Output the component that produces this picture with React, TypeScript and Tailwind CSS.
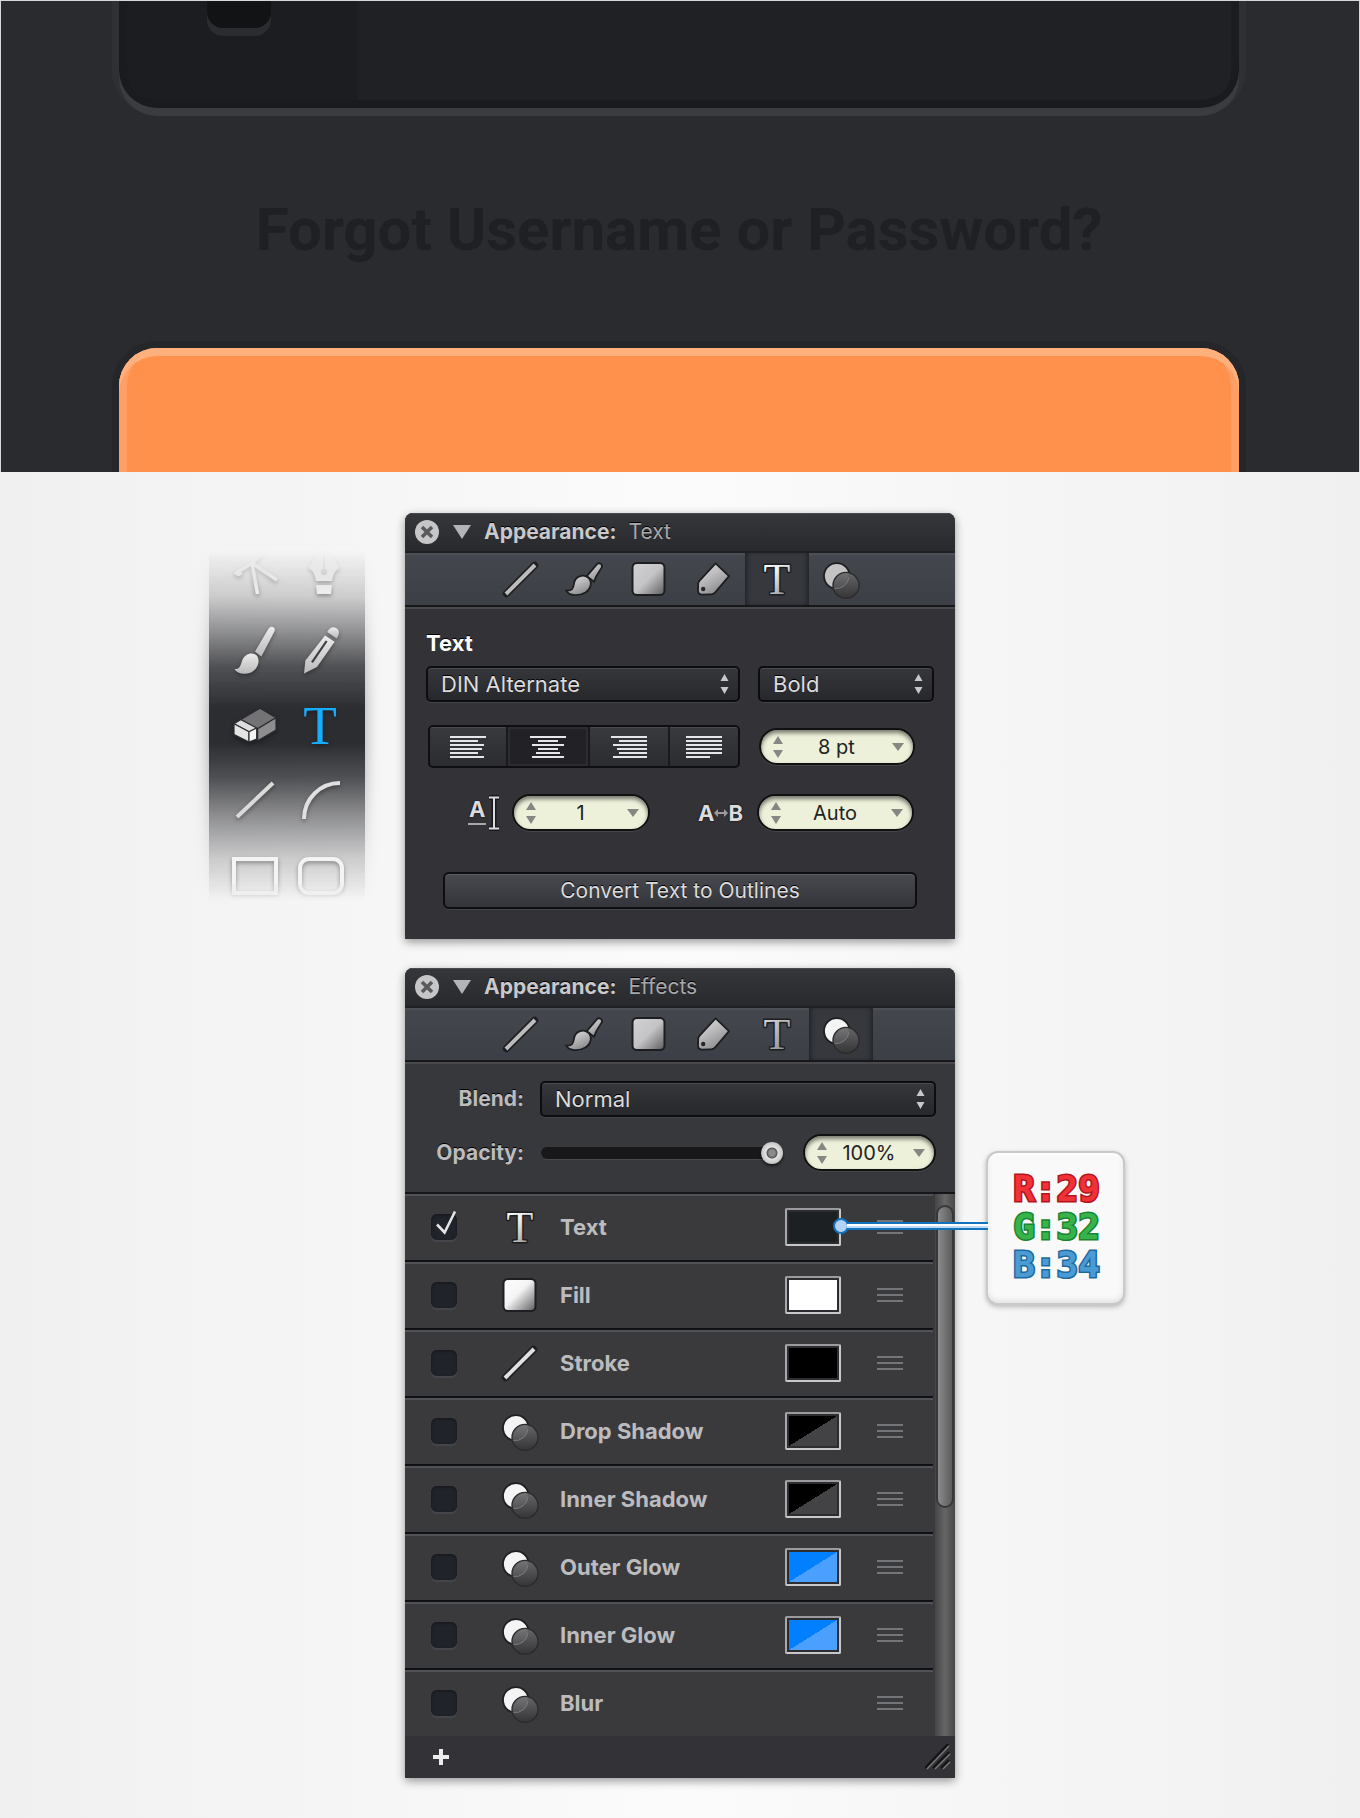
import { useState, type ReactNode } from "react";

const selectBox =
  "h-9 w-full appearance-none rounded-[5px] border-2 border-[#0d0d10] bg-linear-to-b from-[#36373b] to-[#27282c] pl-[13px] pr-8 text-[22px] leading-7 text-[#dcdcde] outline-none shadow-[inset_0_1px_0_#4b4c50,0_1px_0_#434347] [text-shadow:0_-1px_0_#000]";

/* Gradients shared by every icon on the page */
function Gradients() {
  return (
    <svg width="0" height="0" className="absolute" aria-hidden="true">
      <defs>
        <linearGradient id="silver" x1="0" y1="0" x2="0.6" y2="1">
          <stop offset="0" stopColor="#dededf" />
          <stop offset="0.45" stopColor="#bfbfc1" />
          <stop offset="1" stopColor="#8a8a8c" />
        </linearGradient>
        <linearGradient id="bright" x1="0" y1="0" x2="0.6" y2="1">
          <stop offset="0" stopColor="#ffffff" />
          <stop offset="0.45" stopColor="#f0f0f0" />
          <stop offset="1" stopColor="#8c8c8c" />
        </linearGradient>
        <linearGradient id="squareSilver" x1="0" y1="0" x2="1" y2="1">
          <stop offset="0" stopColor="#d2d2d4" />
          <stop offset="0.5" stopColor="#c4c4c6" />
          <stop offset="1" stopColor="#5c5c5e" />
        </linearGradient>
        <linearGradient id="squareBright" x1="0" y1="0" x2="1" y2="1">
          <stop offset="0" stopColor="#ffffff" />
          <stop offset="0.45" stopColor="#f4f4f4" />
          <stop offset="1" stopColor="#5a5a5a" />
        </linearGradient>
        <linearGradient id="lens" x1="0" y1="0" x2="0" y2="1">
          <stop offset="0" stopColor="#6a6a6c" stopOpacity="0.92" />
          <stop offset="1" stopColor="#343436" stopOpacity="0.95" />
        </linearGradient>
        <linearGradient id="tool" x1="0" y1="0" x2="0" y2="1">
          <stop offset="0" stopColor="#ececec" />
          <stop offset="1" stopColor="#b9b9ba" />
        </linearGradient>
      </defs>
    </svg>
  );
}

type IconName = "line" | "brush" | "square" | "tag" | "type" | "effects";

function Icon({ name, bright = false }: { name: IconName; bright?: boolean }) {
  const fill = bright ? "url(#bright)" : "url(#silver)";
  const edge = "#1d1e21";
  return (
    <svg viewBox="0 0 40 40" className="size-10 shrink-0 overflow-visible" aria-hidden="true">
      {name === "line" && (
        <>
          <path d="M5.5 34.5 33.5 6.5" stroke={edge} strokeWidth="7.4" strokeLinecap="round" />
          <path d="M5 35 34 6" stroke={bright ? "#e0e0de" : "#bcbcbe"} strokeWidth="4" />
        </>
      )}
      {name === "brush" && (
        <g fill={fill} stroke={edge} strokeWidth="1.8" strokeLinejoin="round">
          <path d="M21.8 17.2 32 5.2C34 2.8 38.4 5.6 36.6 8.6L31.2 17.4 29 22.8Z" />
          <path d="M1 31.4C7 32.6 8.4 29.4 9 24.6 10 17.4 18 14.8 23 18.4 27.6 22.4 26.4 29.6 20.4 33.4 14 37.2 4.4 37.4 1 31.4Z" />
        </g>
      )}
      {name === "square" && (
        <rect x="3.5" y="4" width="32" height="32" rx="4.5" fill={bright ? "url(#squareBright)" : "url(#squareSilver)"} stroke={edge} strokeWidth="2" />
      )}
      {name === "tag" && (
        <>
          <path d="M22.6 4.4 36 17.2 22 33.6Q20.4 35.4 18 35.4L8.6 35.6Q5 35.4 5 31.6L5.2 24.6Q5.4 23 6.6 21.6Z" fill={fill} stroke={edge} strokeWidth="1.8" strokeLinejoin="round" />
          <circle cx="10.2" cy="30" r="2.2" fill="#26272a" />
        </>
      )}
      {name === "type" && (
        <text x="20" y="35" textAnchor="middle" fontSize="44" fontWeight="400" fontFamily="Liberation Serif, serif" fill={fill} stroke={edge} strokeWidth="3" paintOrder="stroke" strokeLinejoin="round">
          T
        </text>
      )}
      {name === "effects" && (
        <>
          <circle cx="15.8" cy="17" r="12.8" fill={bright ? "#f4f4f4" : "#c4c4c5"} stroke={edge} strokeWidth="1.8" />
          <circle cx="25" cy="26.4" r="13" fill="url(#lens)" stroke="#2b2b2d" strokeWidth="1.4" />
          <path d="M28 18A12.8 12.8 0 0 1 13.4 29.4" fill="none" stroke="#7e7e80" strokeWidth="1" />
        </>
      )}
    </svg>
  );
}

function HeroPreview() {
  return (
    <section className="flex h-[472px] flex-col overflow-hidden border-x border-t border-[#d4d9dc] bg-[#2a2b2e] pl-[118px] pr-[120px]">
      <div className="relative h-[107px] shrink-0 rounded-b-[38px] bg-[#1f2124] bg-linear-to-r from-[#1c1d21] from-[239px] to-[#1f2124] to-[239px] shadow-[0_8px_0_#3b3c40,0_0_0_7px_#2f3033,inset_0_-8px_0_#1a1b1e,inset_8px_0_0_#1a1b1f,inset_-8px_0_0_#1b1c1f]">
        <div className="ml-[88px] h-[27px] w-16 rounded-b-2xl bg-[#121315] shadow-[0_8px_0_#2b2c2f]" />
      </div>
      <div className="flex h-60 shrink-0 items-center justify-center pt-1">
        <a href="#recover" className="whitespace-nowrap font-['Roboto',sans-serif] text-6xl font-bold text-[#1e2024]">
          Forgot Username or Password?
        </a>
      </div>
      <div className="flex-1 rounded-t-[38px] bg-[#ff914d] shadow-[0_0_0_7px_#25262a,inset_0_8px_0_#ffb07d,inset_8px_0_0_#ff9f66,inset_-8px_0_0_#ff9f66]" />
    </section>
  );
}

function Tool({ label, children }: { label: string; children: ReactNode }) {
  return (
    <button type="button" aria-label={label} className="flex h-[75px] w-[66px] items-center justify-center">
      <svg viewBox="0 0 48 48" className="size-12 overflow-visible drop-shadow-[0_2px_2px_rgba(0,0,0,0.35)]" aria-hidden="true">
        {children}
      </svg>
    </button>
  );
}

function ToolStrip() {
  return (
    <div className="relative h-[350px] w-[156px]">
      <div className="absolute inset-0 bg-[#2c2d31] shadow-[0_0_14px_rgba(0,0,0,0.35)] [mask-clip:no-clip] [mask-image:linear-gradient(to_bottom,transparent,rgba(0,0,0,.2)_13%,rgba(0,0,0,.5)_23%,rgba(0,0,0,.82)_33%,#000_45%,#000_55%,rgba(0,0,0,.82)_65%,rgba(0,0,0,.5)_76%,rgba(0,0,0,.2)_88%,transparent)]" />
      <div className="relative flex h-full flex-col items-center justify-center overflow-hidden pb-[2px] pl-[2px] [mask-image:linear-gradient(to_bottom,transparent,#000_12%,#000_94%,transparent)]">
        <div className="grid shrink-0 grid-cols-2">
          <Tool label="Point tool">
            <g stroke="#ededee" strokeWidth="3.6" fill="none">
              <path d="M21 12 26.5 43M21 12 46 29M32 2 21 12 8 20" />
              <path d="M3 22 8 18 11 23 7 25Z" fill="#ededee" strokeWidth="1" />
            </g>
          </Tool>
          <Tool label="Pen tool">
            <g fill="#ededee">
              <path d="M27-12 42.5 17C37 20 36 25 35 30H19C18 25 17 20 11.5 17Z" />
              <path d="M19 34H35L34 43H20Z" />
              <path d="M27-6V20" stroke="#c9c9cb" strokeWidth="1.6" />
              <circle cx="27" cy="21" r="3.2" fill="#c9c9cb" />
            </g>
          </Tool>
          <Tool label="Brush tool">
            <g fill="url(#tool)">
              <path d="M24 25.5 37.6 2.6C40-1 45.4 1 43.4 5.6L32 27.4C30.8 29 31 30 30.2 30.6Z" />
              <path d="M3.4 43C8.8 43.4 9.4 40 11 35 13.4 27.6 21.6 25.4 25.8 29.6 29.6 34.4 27 43 20 46.4 13.4 49 6 47.6 3.4 43Z" />
            </g>
          </Tool>
          <Tool label="Pencil tool">
            <g fill="url(#tool)">
              <path d="M30.2 6C32.6 1 36.6.2 39.8 2.4 43 4.6 42.4 9 39.6 12.4Z" />
              <path d="M28 9.4 37.6 15.8 20 41 7 47.6 8.4 34.6Z" />
            </g>
            <path d="M29.6 15 15 36.4" stroke="#3c3d41" strokeWidth="2.2" />
          </Tool>
          <Tool label="Eraser tool">
            <g stroke="#2c2d31" strokeWidth="1.2" strokeLinejoin="round">
              <path d="M9 19 29 7.3 45 16.7 26.7 27.8Z" fill="#737375" />
              <path d="M26.7 27.8 45 16.7V29L26.7 39.8Z" fill="#8d8d8f" />
              <path d="M3 22.8 10 18.6 25.7 27 18 30.7Z" fill="#dededf" />
              <path d="M3 22.8 18 30.7V41L3 33.6Z" fill="#e4e4e5" />
              <path d="M18 30.7 25.7 27V38L18 41Z" fill="#f4f4f4" />
            </g>
          </Tool>
          <Tool label="Text tool">
            <text x="23" y="43" textAnchor="middle" fontSize="55" fontFamily="Liberation Serif, serif" fill="#17adff">
              T
            </text>
          </Tool>
          <Tool label="Line tool">
            <path d="M6 41 42 7" stroke="#dadadb" strokeWidth="4" />
          </Tool>
          <Tool label="Arc tool">
            <path d="M7 43C7 23 23 7 43 7" stroke="#e0e0e1" strokeWidth="4" fill="none" />
          </Tool>
          <Tool label="Rectangle tool">
            <rect x="3" y="8" width="42" height="34" stroke="#f4f4f5" strokeWidth="4" fill="none" />
          </Tool>
          <Tool label="Rounded rectangle tool">
            <rect x="3" y="8" width="42" height="34" rx="9" stroke="#f4f4f5" strokeWidth="4" fill="none" />
          </Tool>
        </div>
      </div>
    </div>
  );
}

const tabs: { name: IconName; label: string }[] = [
  { name: "line", label: "Stroke" },
  { name: "brush", label: "Brush" },
  { name: "square", label: "Fill" },
  { name: "tag", label: "Label" },
  { name: "type", label: "Text" },
  { name: "effects", label: "Effects" },
];

function Panel({ title, active, children }: { title: string; active: IconName; children: ReactNode }) {
  return (
    <section className="overflow-hidden rounded-t-lg bg-[#333236] shadow-[0_3px_10px_rgba(0,0,0,0.4)]">
      <header className="flex h-10 items-center border-b-2 border-[#1f2023] bg-linear-to-b from-[#36373b] to-[#28292c] pl-[10px] shadow-[inset_0_1px_0_#4a4b4e]">
        <button type="button" aria-label="Close" className="flex size-6 items-center justify-center rounded-full bg-[#c6c6c8]">
          <svg viewBox="0 0 24 24" className="size-6" aria-hidden="true">
            <path d="M7 7 17 17M17 7 7 17" stroke="#5a5a5d" strokeWidth="3.6" />
          </svg>
        </button>
        <button type="button" aria-label="Collapse" className="ml-[14px]">
          <svg viewBox="0 0 18 14" className="h-[14px] w-[18px]" aria-hidden="true">
            <path d="M0 0H18L9 14Z" fill="#b4b4b6" />
          </svg>
        </button>
        <h2 className="ml-[13px] text-[21px] leading-6 font-bold text-[#c9c9cb] [text-shadow:0_-1px_0_#000]">
          Appearance:<span className="ml-3 font-normal text-[#a9a9ac]">{title}</span>
        </h2>
      </header>
      <nav className="flex h-[54px] justify-center border-b-2 border-[#17181b] bg-linear-to-b from-[#44474d] to-[#3c3f46] pl-[2px] shadow-[inset_0_2px_0_#4c4f54]">
        {tabs.map((t) => (
          <button
            key={t.name}
            type="button"
            aria-label={t.label}
            className={
              t.name === active
                ? "flex w-16 items-center justify-center bg-[#36383e] shadow-[inset_4px_0_4px_-2px_#212227,inset_-4px_0_4px_-2px_#212227]"
                : "flex w-16 items-center justify-center"
            }
          >
            <Icon name={t.name} bright={t.name === active} />
          </button>
        ))}
      </nav>
      {children}
    </section>
  );
}

function Select({ label, id, options }: { label: string; id: string; options: string[] }) {
  return (
    <div className="relative">
      <select id={id} aria-label={label} className={selectBox}>
        {options.map((o) => (
          <option key={o}>{o}</option>
        ))}
      </select>
      <svg viewBox="0 0 9 20" className="pointer-events-none absolute top-2 right-[11px] h-5 w-[9px]" aria-hidden="true">
        <path d="M0.5 7 4.5 0 8.5 7ZM0.5 13 4.5 20 8.5 13Z" fill="#c8c8ca" />
      </svg>
    </div>
  );
}

function Stepper({ label, value }: { label: string; value: string }) {
  const [text, setText] = useState(value);
  return (
    <div className="flex h-[37px] w-full items-center rounded-full border-2 border-[#111112] bg-[#eef1da] pr-[9px] pl-3 shadow-[inset_0_3px_4px_rgba(0,0,0,0.5),0_1px_0_#454548]">
      <div className="flex flex-col gap-[6px]">
        <button type="button" aria-label={`Increase ${label}`}>
          <svg viewBox="0 0 10 8" className="h-2 w-[10px]" aria-hidden="true">
            <path d="M0 8 5 0 10 8Z" fill="#858782" />
          </svg>
        </button>
        <button type="button" aria-label={`Decrease ${label}`}>
          <svg viewBox="0 0 10 8" className="h-2 w-[10px]" aria-hidden="true">
            <path d="M0 0 5 8 10 0Z" fill="#858782" />
          </svg>
        </button>
      </div>
      <input
        aria-label={label}
        value={text}
        onChange={(e) => setText(e.target.value)}
        className="w-0 flex-1 bg-transparent pr-[2px] text-center text-xl leading-6 text-[#222] outline-none"
      />
      <button type="button" aria-label={`${label} presets`}>
        <svg viewBox="0 0 12 8" className="h-2 w-3" aria-hidden="true">
          <path d="M0 0H12L6 8Z" fill="#858782" />
        </svg>
      </button>
    </div>
  );
}

const alignments: { label: string; lines: [number, number][] }[] = [
  { label: "Align left", lines: [[0, 36], [0, 28], [0, 34], [0, 32], [0, 28], [0, 34]] },
  { label: "Align center", lines: [[0, 36], [8, 28], [2, 34], [8, 28], [6, 30], [2, 34]] },
  { label: "Align right", lines: [[0, 36], [8, 36], [2, 36], [6, 36], [8, 36], [2, 36]] },
  { label: "Justify", lines: [[0, 36], [0, 36], [0, 36], [0, 36], [0, 36], [0, 24]] },
];

function TextPanel() {
  return (
    <Panel title="Text" active="type">
      <div className="border-t-2 border-[#49494d] px-[21px] pt-5 pb-[30px]">
        <h3 className="text-[22px] leading-7 font-bold text-white [text-shadow:0_-1px_0_#000]">Text</h3>
        <div className="mt-[9px] flex gap-[18px]">
          <div className="flex-1">
            <Select id="font-family" label="Font family" options={["DIN Alternate"]} />
          </div>
          <div className="w-44">
            <Select id="font-style" label="Font style" options={["Bold"]} />
          </div>
        </div>
        <div className="mt-[23px] flex items-center justify-between pr-[19px] pl-[2px]">
          <div className="grid h-[43px] w-[312px] grid-cols-[79fr_83fr_81fr_69fr] divide-x-2 divide-[#1a1a1d] overflow-hidden rounded-[5px] border-2 border-[#0f0f12] bg-linear-to-b from-[#393a3e] to-[#2b2c30]">
            {alignments.map((a, i) => (
              <button
                key={a.label}
                type="button"
                aria-label={a.label}
                aria-pressed={i === 1}
                className={
                  i === 1
                    ? "flex items-center justify-center bg-[#222226] shadow-[inset_0_0_0_2px_#2d2d31]"
                    : "flex items-center justify-center shadow-[inset_0_1px_0_#48494c]"
                }
              >
                <svg viewBox="0 0 36 22" className="h-[22px] w-9" aria-hidden="true">
                  {a.lines.map(([from, to], n) => (
                    <path key={n} d={`M${from} ${n * 4 + 1}H${to}`} stroke="#e6e6e8" strokeWidth="2" />
                  ))}
                </svg>
              </button>
            ))}
          </div>
          <div className="w-[156px]">
            <Stepper label="Font size" value="8 pt" />
          </div>
        </div>
        <div className="mt-[26px] flex items-center pr-[20px] pl-[42px]">
          <span className="flex w-11 items-start gap-[2px]" aria-hidden="true">
            <span className="border-b-2 border-[#a8a8aa] px-px text-[22px] leading-7 font-bold text-[#dcdcde] [text-shadow:0_0_2px_#000]">A</span>
            <svg viewBox="0 0 12 36" className="h-9 w-3">
              <path d="M1 2.5H11M1 33.5H11M6 2V34" stroke="#19191b" strokeWidth="5" />
              <path d="M1 2.5H11M1 33.5H11M6 2V34" stroke="#dcdcde" strokeWidth="2" />
            </svg>
          </span>
          <div className="w-[138px]">
            <Stepper label="Line height" value="1" />
          </div>
          <span className="ml-auto flex items-center text-[22px] leading-7 font-bold text-[#dcdcde] [text-shadow:0_0_2px_#000]" aria-hidden="true">
            A
            <svg viewBox="0 0 14 8" className="h-2 w-[14px]">
              <path d="M0 4 4 0V3H10V0L14 4 10 8V5H4V8Z" fill="#9a9a9c" />
            </svg>
            B
          </span>
          <div className="ml-[14px] w-[157px]">
            <Stepper label="Letter spacing" value="Auto" />
          </div>
        </div>
        <div className="mt-[41px] px-[17px]">
          <button
            type="button"
            className="h-[37px] w-full rounded-md border-2 border-[#0d0e11] bg-linear-to-b from-[#494a4f] to-[#34353b] text-[21px] leading-6 text-[#dcdcde] shadow-[inset_0_1px_0_#5c5d61,0_1px_0_#434347] [text-shadow:0_-1px_0_#000]"
          >
            Convert Text to Outlines
          </button>
        </div>
      </div>
    </Panel>
  );
}

type Effect = { name: string; icon: IconName; swatch?: string; checked?: boolean };

const effects: Effect[] = [
  { name: "Text", icon: "type", swatch: "bg-[#1d2022]", checked: true },
  { name: "Fill", icon: "square", swatch: "bg-white" },
  { name: "Stroke", icon: "line", swatch: "bg-black" },
  { name: "Drop Shadow", icon: "effects", swatch: "bg-[linear-gradient(to_bottom_right,#000_50%,#434345_50%)]" },
  { name: "Inner Shadow", icon: "effects", swatch: "bg-[linear-gradient(to_bottom_right,#000_50%,#434345_50%)]" },
  { name: "Outer Glow", icon: "effects", swatch: "bg-[linear-gradient(to_bottom_right,#0080ff_50%,#4ba0ff_50%)]" },
  { name: "Inner Glow", icon: "effects", swatch: "bg-[linear-gradient(to_bottom_right,#0080ff_50%,#4ba0ff_50%)]" },
  { name: "Blur", icon: "effects" },
];

function EffectRow({ effect }: { effect: Effect }) {
  const [on, setOn] = useState(Boolean(effect.checked));
  return (
    <li className="flex h-[68px] items-center border-t-2 border-b-2 border-t-[#515256] border-b-[#101114] pb-[2px] pl-[26px] last:h-[66px] last:border-b-0">
      <label className="flex flex-1 items-center text-[22px] leading-7 font-bold text-[#bcbcbf]">
        <span className="relative size-[26px]">
          <input
            type="checkbox"
            checked={on}
            onChange={() => setOn(!on)}
            className="block size-[26px] appearance-none rounded-[6px] bg-[#21232b] shadow-[inset_0_1px_3px_#15161a,0_2px_0_#44464b]"
          />
          {on && (
            <svg viewBox="0 0 26 26" className="pointer-events-none absolute inset-0 size-[26px] overflow-visible" aria-hidden="true">
              <path d="M6 10.5 13.6 18.5 24-2.5" stroke="#e4e4e8" strokeWidth="2.6" fill="none" />
            </svg>
          )}
        </span>
        <span className="mr-5 ml-[43px]">
          <Icon name={effect.icon} bright />
        </span>
        {effect.name}
      </label>
      {effect.swatch && (
        <button type="button" aria-label={`${effect.name} color`} className="h-[38px] w-14 rounded-[2px] border-2 border-t-[#9b9b9d] border-r-[#c8c8ca] border-b-[#c8c8ca] border-l-[#a9a9ab] bg-[#2c2d30] p-[2px]">
          <span className={`block size-full ${effect.swatch}`} />
        </button>
      )}
      <button type="button" aria-label={`Reorder ${effect.name}`} className="mr-[30px] ml-9 flex w-[26px] flex-col gap-1">
        <span className="h-[2px] bg-[#747578]" />
        <span className="h-[2px] bg-[#747578]" />
        <span className="h-[2px] bg-[#747578]" />
      </button>
    </li>
  );
}

function EffectsPanel() {
  const [opacity, setOpacity] = useState(100);
  return (
    <Panel title="Effects" active="effects">
      <div className="border-t-2 border-b-2 border-t-[#49494d] border-b-[#15161a] bg-[#37383b] pt-[17px] pr-[19px] pb-[21px]">
        <div className="flex items-center">
          <label htmlFor="blend" className="w-[119px] text-right text-[21px] leading-6 font-bold text-[#bcbcbf] [text-shadow:0_-1px_0_#000]">
            Blend:
          </label>
          <div className="ml-4 flex-1">
            <Select id="blend" label="Blend" options={["Normal"]} />
          </div>
        </div>
        <div className="mt-[17px] flex items-center">
          <label htmlFor="opacity" className="w-[119px] text-right text-[21px] leading-6 font-bold text-[#bcbcbf] [text-shadow:0_-1px_0_#000]">
            Opacity:
          </label>
          <input
            id="opacity"
            type="range"
            value={opacity}
            onChange={(e) => setOpacity(Number(e.target.value))}
            className="ml-[17px] h-3 min-w-0 flex-1 appearance-none rounded-full bg-[#18181a] shadow-[0_1px_0_#4a4a4d] [&::-webkit-slider-thumb]:size-[22px] [&::-webkit-slider-thumb]:appearance-none [&::-webkit-slider-thumb]:rounded-full [&::-webkit-slider-thumb]:bg-[radial-gradient(circle,#8a8a8b_3px,#555_5px,#e4e4e4_6px,#c2c2c2_11px)] [&::-webkit-slider-thumb]:shadow-[0_2px_3px_rgba(0,0,0,0.6)]"
          />
          <div className="ml-5 w-[133px]">
            <Stepper label="Opacity value" value="100%" />
          </div>
        </div>
      </div>
      <div className="flex bg-[#3a3a3d]">
        <ul className="flex-1">
          {effects.map((e) => (
            <EffectRow key={e.name} effect={e} />
          ))}
        </ul>
        <div className="ml-[2px] w-5 bg-linear-to-r from-[#454545] via-[#666] to-[#484848] px-px pt-[11px]">
          <div className="h-[303px] w-[18px] rounded-full border-2 border-[#38383a] bg-linear-to-r from-[#8b8b8b] to-[#5c5c5c]" />
        </div>
      </div>
      <footer className="flex h-[42px] items-center justify-between pr-1 pl-7">
        <button type="button" aria-label="Add effect">
          <svg viewBox="0 0 16 16" className="size-4" aria-hidden="true">
            <path d="M8 0V16M0 8H16" stroke="#ececee" strokeWidth="4" />
          </svg>
        </button>
        <svg viewBox="0 0 26 26" className="size-[26px]" aria-hidden="true">
          <path d="M0 24 23 0M8 24 24 8M16 24 24 16" stroke="#131315" strokeWidth="2" />
          <path d="M2 25 24 2M10 25 25 10M18 25 25 18" stroke="#77777a" strokeWidth="1.4" />
        </svg>
      </footer>
    </Panel>
  );
}

function ColorCallout() {
  return (
    <aside className="relative flex h-[154px] w-[139px] flex-col items-center justify-center rounded-xl border-2 border-[#c9c9c9] bg-[#f9f9f9] pb-[2px] pl-[2px] font-['DejaVu_Sans_Mono',monospace] text-4xl leading-[38px] font-bold shadow-[0_2px_5px_rgba(0,0,0,0.25),inset_0_2px_2px_#fff,inset_0_-3px_5px_#e4e4e4]">
      <p className="text-[#ee3238] [-webkit-text-stroke:3px_#b3141b] [paint-order:stroke]">R:29</p>
      <p className="text-[#37b34a] [-webkit-text-stroke:3px_#1a8431] [paint-order:stroke]">G:32</p>
      <p className="text-[#4a9bd4] [-webkit-text-stroke:3px_#1e699f] [paint-order:stroke]">B:34</p>
      <span className="absolute top-[65px] right-full flex h-4 w-[155px] items-center">
        <span className="size-4 shrink-0 rounded-full border-2 border-[#1272bd] bg-[#b4d2f6]" />
        <span className="-ml-[2px] h-2 flex-1 border-y-2 border-[#1272bd] bg-linear-to-b from-white from-50% to-[#bcdaf6] to-50%" />
      </span>
    </aside>
  );
}

export default function App() {
  return (
    <div className="min-h-screen bg-linear-to-r from-[#f0f0f0] via-[#fbfbfb] to-[#f0f0f0] font-['Inter',sans-serif]">
      <Gradients />
      <HeroPreview />
      <main className="grid grid-cols-[1fr_550px_1fr] items-start pt-[41px] pb-10">
        <div className="mt-[38px] flex justify-end pr-10">
          <ToolStrip />
        </div>
        <div className="flex flex-col gap-[29px]">
          <TextPanel />
          <EffectsPanel />
        </div>
        <div className="mt-[638px] ml-[31px]">
          <ColorCallout />
        </div>
      </main>
    </div>
  );
}
